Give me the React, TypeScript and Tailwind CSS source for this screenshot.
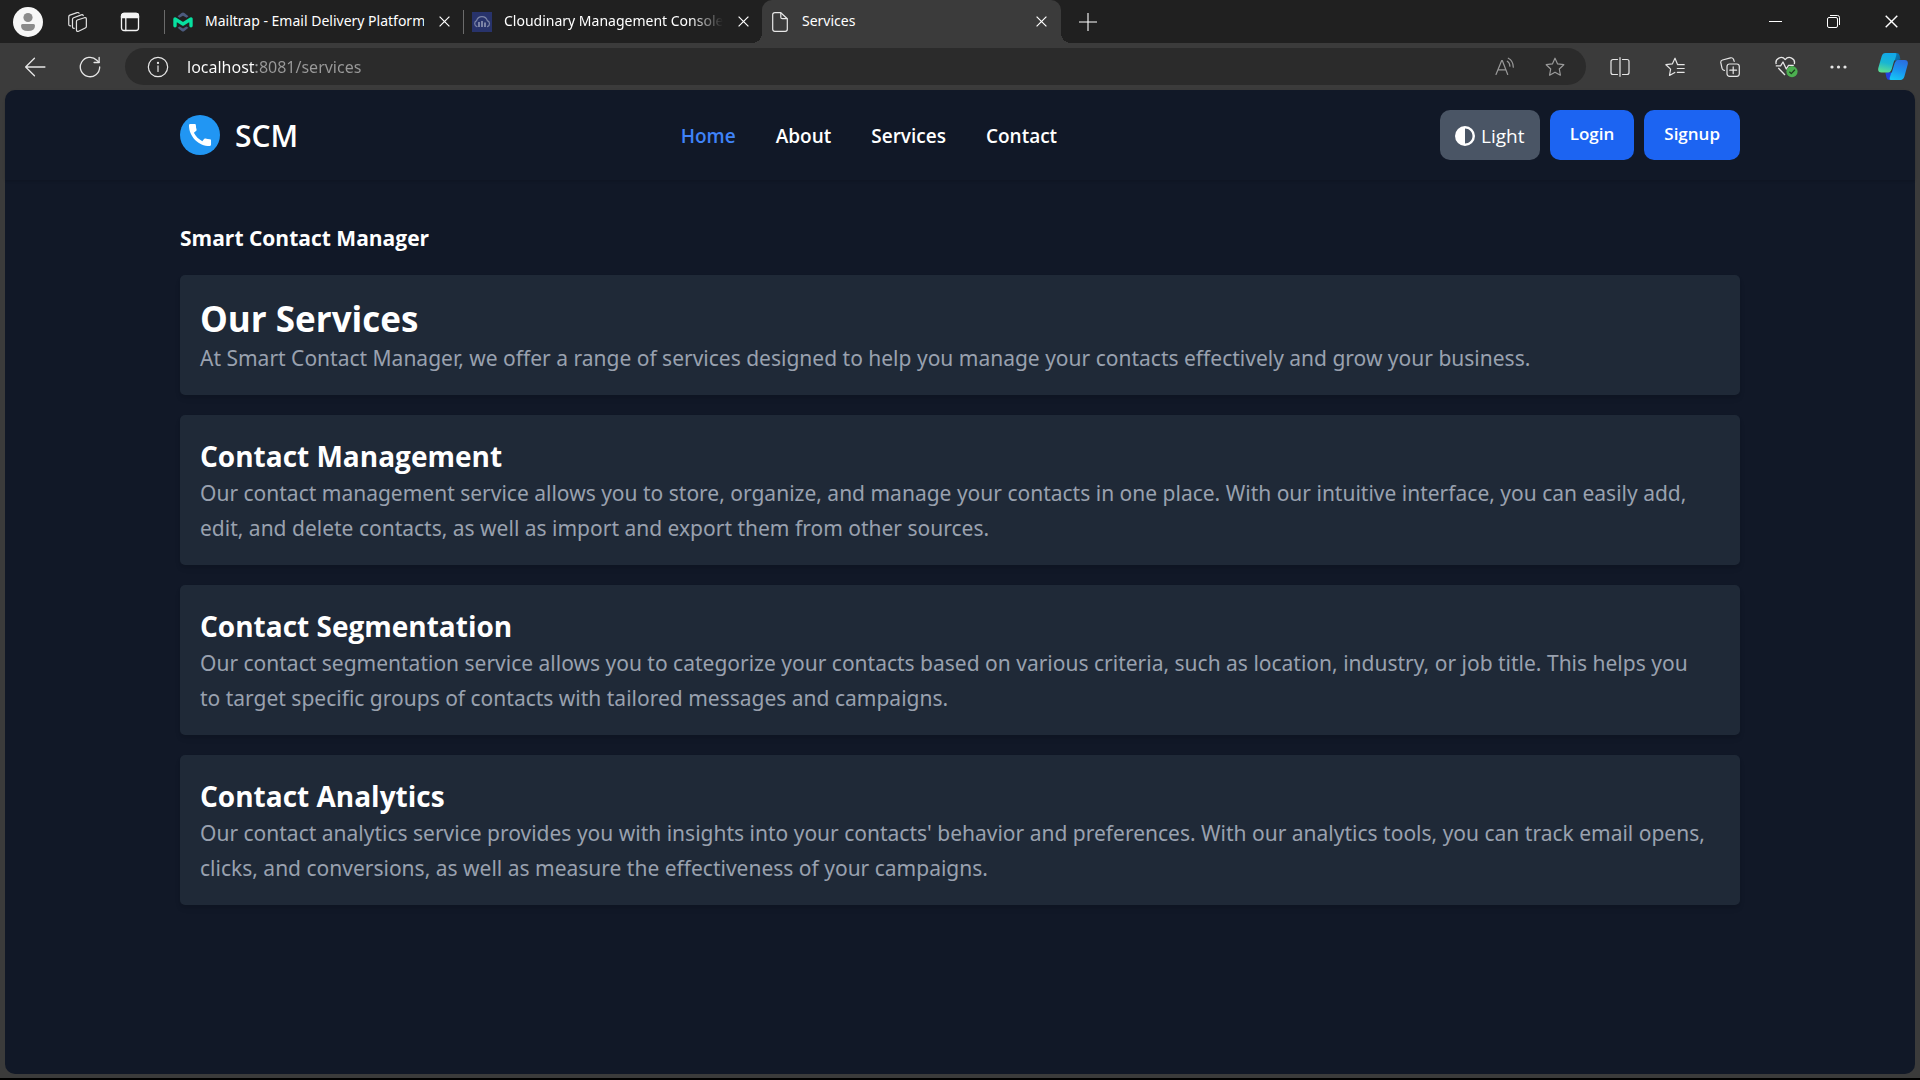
import type { ReactNode } from "react";
import { FaCircleHalfStroke } from "react-icons/fa6";

type IconProps = { children: ReactNode; className?: string; width?: number };

function Icon({ children, className = "size-5", width = 1.2 }: IconProps) {
  return (
    <svg
      viewBox="0 0 20 20"
      className={`shrink-0 ${className}`}
      fill="none"
      stroke="currentColor"
      strokeWidth={width}
      strokeLinecap="round"
      strokeLinejoin="round"
      aria-hidden="true"
    >
      {children}
    </svg>
  );
}

function CloseGlyph({ className = "size-[11px]" }: { className?: string }) {
  return (
    <svg viewBox="0 0 11 11" className={className} fill="none" stroke="currentColor" strokeWidth="1.2" aria-hidden="true">
      <path d="M.6.6l9.8 9.8M10.4.6L.6 10.4" />
    </svg>
  );
}

function MailtrapLogo() {
  return (
    <svg viewBox="0 0 20 20" className="size-5 shrink-0" aria-hidden="true">
      <path d="M4.6 4.2L8.6 1q1.4-1 2.8 0l4 3.2-1.8 1.6L10 3.8 6.4 5.8z" fill="#4c5b7e" />
      <path d="M4.6 15.8L8.6 19q1.4 1 2.8 0l4-3.2-2-1.3L10 16.4l-3.4-1.9z" fill="#4c5b7e" />
      <path d="M2 13.8V7l8 5 8-5v6.8" fill="none" stroke="#07e0a0" strokeWidth="3.4" strokeLinejoin="round" strokeLinecap="round" />
    </svg>
  );
}

function CloudinaryLogo() {
  return (
    <svg viewBox="0 0 20 20" className="size-5 shrink-0" aria-hidden="true">
      <path fill="#28336b" d="M0 0h20v20H0z" />
      <path
        d="M5 14.6A3.2 3.2 0 0 1 4.600 8.600a5.600 5.600 0 0 1 10.700 0A3.200 3.200 0 0 1 15.500 14.600"
        fill="none"
        stroke="#7c84a6"
        strokeWidth="1.2"
        strokeLinecap="round"
      />
      <path d="M7 10v5M10 9v6M13 10.500v4.500" stroke="#7c84a6" strokeWidth="2" />
    </svg>
  );
}

function FileGlyph() {
  return (
    <svg viewBox="0 0 16 20" className="h-5 w-4 shrink-0" fill="none" stroke="#e8e8e8" strokeWidth="1.2" strokeLinejoin="round" aria-hidden="true">
      <path d="M2.600.7h6.200l6.500 6v10.600a2 2 0 0 1-2 2H2.700a2 2 0 0 1-2-2V2.700a2 2 0 0 1 2-2z" />
      <path d="M8.800.7v4.500a1.500 1.500 0 0 0 1.500 1.500h5" />
    </svg>
  );
}

function CopilotLogo() {
  return (
    <svg viewBox="0 0 30 27" className="h-[27px] w-[30px]" aria-hidden="true">
      <defs>
        <linearGradient id="cpLeft" x1="0.5" y1="0" x2="0.3" y2="1">
          <stop offset="0" stopColor="#12a7e8" />
          <stop offset="0.5" stopColor="#19b6d2" />
          <stop offset="1" stopColor="#5fe08f" />
        </linearGradient>
        <linearGradient id="cpRight" x1="0.6" y1="0" x2="0.3" y2="1">
          <stop offset="0" stopColor="#2a6fe0" />
          <stop offset="0.5" stopColor="#1b93f0" />
          <stop offset="1" stopColor="#16c6f4" />
        </linearGradient>
        <linearGradient id="cpTop" x1="0" y1="0" x2="1" y2="1">
          <stop offset="0" stopColor="#0a8fc4" />
          <stop offset="1" stopColor="#0b4f8c" />
        </linearGradient>
      </defs>
      <path d="M14 0h4.500q2.400 0 3 2.300L22.500 6.500q-3 0-4 3L16 18H9z" fill="url(#cpTop)" />
      <path d="M16 27h-4.500q-2.400 0-3-2.300L7.300 19.500q4 0 5-3L15 9l6 .5z" fill="#2340e0" />
      <path d="M7.500 0H17q2 0 1.200 2.500L14 16.500q-1 3-4 3H3.500Q-.6 19.500.3 15L3.600 3.400Q4.600 0 7.500 0z" fill="url(#cpLeft)" />
      <path d="M22.500 27H13q-2 0-1.200-2.500L16 10.500q1-3.500 4-3.500h6.500q4.100 0 3.200 4.500l-3.300 12.100Q25.400 27 22.500 27z" fill="url(#cpRight)" />
      <path d="M14.600 13L16.200 7.500h2.600q-1.600.6-2.300 3L13.800 19.500h-2.500q2-.8 3.300-6.500z" fill="#3b3b3b" />
    </svg>
  );
}

function PhoneLogo() {
  return (
    <svg viewBox="0 0 40 40" className="size-10" aria-hidden="true">
      <circle cx="20" cy="20" r="20" fill="#2196f3" />
      <path
        transform="translate(5.300 5.300) scale(1.225)"
        d="M20.010 15.380c-1.230 0-2.420-.2-3.530-.56a.977.977 0 0 0-1.010.24l-1.570 1.970c-2.830-1.350-5.480-3.900-6.890-6.830l1.950-1.660c.27-.28.350-.67.240-1.020-.37-1.110-.56-2.300-.56-3.530C8.640 3.450 8.190 3 7.650 3H4.190C3.650 3 3 3.240 3 3.990 3 13.280 10.730 21 20.010 21c.71 0 .99-.63.99-1.180v-3.450c0-.54-.45-.99-.99-.99z"
        fill="#fff"
      />
    </svg>
  );
}

function Tab({ icon, title, fade = false }: { icon: ReactNode; title: string; fade?: boolean }) {
  return (
    <div className="flex h-full w-[298px] items-center gap-3 pr-[11px] pl-2">
      {icon}
      <button type="button" className={`min-w-0 flex-1 overflow-hidden pb-0.5 text-left whitespace-nowrap ${fade ? "mask-r-from-85%" : ""}`}>
        {title}
      </button>
      <button type="button" aria-label={`Close ${title}`} className="grid size-4 place-items-center">
        <CloseGlyph />
      </button>
    </div>
  );
}

function TabStrip() {
  return (
    <header className="flex h-[43px] items-center bg-[#202020] font-['Noto_Sans',sans-serif] text-[14px] text-white">
      <button type="button" aria-label="Profile" className="ml-[13px] size-[30px]">
        <svg viewBox="0 0 30 30" className="size-[30px]" aria-hidden="true">
          <circle cx="15" cy="15" r="15" fill="#f7f7f7" />
          <circle cx="15" cy="10.500" r="4.600" fill="#8b8b8b" />
          <path d="M8 18.500q0-1.500 1.500-1.500h11q1.500 0 1.500 1.500 0 5.500-7 5.500t-7-5.500z" fill="#8b8b8b" />
        </svg>
      </button>
      <button type="button" aria-label="Workspaces" className="ml-[23px] text-[#e0e0e0]">
        <Icon className="size-[22px]" width={1.1}>
          <path d="M10.300 8.200l6.500-2.100q1.700-.4 1.700 1.200v6.800q0 1-1 1.400l-6 2.900q-2 .7-2-1.200V9.600q0-1 .8-1.400z" />
          <path d="M7.600 15.700q-1.700.3-1.700-1.400V7.500q0-1 1-1.400l7-2.600q1.300-.4 1.800.6" />
          <path d="M4.200 13.500q-1.700.1-1.700-1.400V5.200q0-1 1-1.400l6.600-2.300q1.400-.4 1.800.5" />
        </Icon>
      </button>
      <button type="button" aria-label="Tab actions" className="ml-8 text-[#f4f4f4]">
        <Icon className="size-5" width={1.3}>
          <rect x="1.500" y="1.500" width="17" height="17" rx="2.500" />
          <path d="M1.500 5.500V4a2.500 2.500 0 0 1 2.500-2.500h12A2.500 2.500 0 0 1 18.500 4v1.500z" fill="currentColor" />
          <path d="M5.800 6v12.500" />
        </Icon>
      </button>
      <nav aria-label="Tabs" className="ml-6 flex h-full items-center">
        <span className="h-6 w-px bg-[#6b6b6b]" />
        <Tab icon={<MailtrapLogo />} title="Mailtrap - Email Delivery Platform" />
        <span className="h-6 w-px bg-[#6b6b6b]" />
        <Tab icon={<CloudinaryLogo />} title="Cloudinary Management Console" fade />
        <div className="relative flex h-full w-[299px] items-center gap-[14px] rounded-t-[10px] bg-[#3b3b3b] pr-3 pl-[10px]">
          <span className="absolute right-full bottom-0 size-[10px] bg-[radial-gradient(circle_at_0_0,transparent_10px,#3b3b3b_10px)]" />
          <span className="absolute bottom-0 left-full size-[10px] bg-[radial-gradient(circle_at_100%_0,transparent_10px,#3b3b3b_10px)]" />
          <FileGlyph />
          <button type="button" className="flex-1 pb-0.5 text-left">
            Services
          </button>
          <button type="button" aria-label="Close Services" className="grid size-4 place-items-center">
            <CloseGlyph />
          </button>
        </div>
      </nav>
      <button type="button" aria-label="New tab" className="ml-[18px]">
        <svg viewBox="0 0 18 18" className="size-[18px]" stroke="#fff" strokeWidth="1.1" aria-hidden="true">
          <path d="M9 0v18M0 9h18" />
        </svg>
      </button>
      <div className="mr-[22px] ml-auto flex items-center gap-[45px]">
        <button type="button" aria-label="Minimize" className="h-4">
          <svg viewBox="0 0 13 13" className="size-[13px]" stroke="#fff" strokeWidth="1" aria-hidden="true">
            <path d="M0 6.500h13" />
          </svg>
        </button>
        <button type="button" aria-label="Restore" className="h-4">
          <svg viewBox="0 0 13 13" className="size-[13px]" fill="none" stroke="#fff" strokeWidth="1" aria-hidden="true">
            <rect x=".5" y="2.500" width="10" height="10" rx="1.500" />
            <path d="M3 .5h7.500a2 2 0 0 1 2 2V10" />
          </svg>
        </button>
        <button type="button" aria-label="Close window" className="h-4">
          <CloseGlyph className="size-[13px]" />
        </button>
      </div>
    </header>
  );
}

function Toolbar() {
  return (
    <div className="flex h-[47px] items-center pr-3 pl-6 text-[#e6e6e6]">
      <button type="button" aria-label="Back">
        <Icon className="size-[22px]">
          <path d="M19 10H1.500M9.500 2L1.500 10l8 8" />
        </Icon>
      </button>
      <button type="button" aria-label="Refresh" className="ml-[33px]">
        <Icon className="size-[22px]">
          <path d="M18.800 10A8.800 8.800 0 1 1 16.200 3.800l2 2" />
          <path d="M18.300 1.300v4.600h-4.600" />
        </Icon>
      </button>
      <form className="ml-6 flex h-[37px] flex-1 items-center rounded-full bg-[#2b2b2b] pr-[21px] pl-[22px]">
        <button type="button" aria-label="Site information">
          <Icon className="size-[22px]" width={1.1}>
            <circle cx="10" cy="10" r="8.800" />
            <path d="M10 9v5" />
            <circle cx="10" cy="6.300" r=".5" fill="currentColor" />
          </Icon>
        </button>
        <input
          type="text"
          aria-label="Address"
          defaultValue="localhost:8081/services"
          className="ml-[18px] min-w-0 flex-1 bg-[linear-gradient(90deg,#fff_69px,#9a9a9a_69px)] bg-clip-text font-['Noto_Sans',sans-serif] text-[16px] text-transparent outline-none"
        />
        <div className="flex items-center gap-[30px] text-[#9a9a9a]">
          <button type="button" aria-label="Read aloud">
            <Icon>
              <path d="M1 17.500L6.700 3.500h.6l5.400 14M3 12.800h8" />
              <path d="M12.300 4.200q2.500 1.500 2.600 5M13.300 1.200q4.800 2.300 5 9" />
            </Icon>
          </button>
          <button type="button" aria-label="Add to favorites">
            <Icon>
              <path d="M10 1.200l2.600 5.700 6.200.8-4.500 4.300 1.100 6.200L10 15.200l-5.400 3 1.100-6.200L1.200 7.700l6.200-.8z" />
            </Icon>
          </button>
        </div>
      </form>
      <div className="ml-6 flex items-center gap-[30px]">
        <div className="flex items-center gap-[35px]">
          <button type="button" aria-label="Split screen">
            <Icon>
              <path d="M7.500 2.500H3a2 2 0 0 0-2 2v11a2 2 0 0 0 2 2h4.500M12.500 2.500H17a2 2 0 0 1 2 2v11a2 2 0 0 1-2 2h-4.500M10 .7v18.600" />
            </Icon>
          </button>
          <button type="button" aria-label="Favorites">
            <Icon>
              <path d="M19.200 7.700h-6.600L10 1.200 7.300 6.900.9 7.700l4.700 4.400-1.100 6.300 5.300-3M12.300 11.500h6.900M12.300 15.300h6.900" />
            </Icon>
          </button>
          <button type="button" aria-label="Collections">
            <Icon>
              <rect x="7" y="7" width="12.300" height="12.300" rx="2.500" />
              <path d="M13.200 9.800v6.800M9.800 13.200h6.800M4.500 13.500L3.300 13Q2.300 12.300 2 11.200L.8 5.700Q.5 3.600 2.500 3l8-2.200q2.200-.4 3 1.500l.7 2.100" />
            </Icon>
          </button>
          <button type="button" aria-label="Browser essentials">
            <svg viewBox="0 0 23 22" className="h-[22px] w-[23px]" fill="none" stroke="currentColor" strokeWidth="1.300" strokeLinejoin="round" aria-hidden="true">
              <path d="M1.200 8.200C-.3 2.500 6.800-.8 10.200 3.600 13.700-.8 20.800 2.500 19.300 8.200M3.300 12l6.700 7M.8 9.800h4.800L8 6l3.300 7 2.200-3.700h5.300" />
              <circle cx="17" cy="15.600" r="5.600" fill="#4caf50" stroke="none" />
              <path d="M14.400 15.800l1.900 1.800 3.600-3.900" stroke="#1e3a1f" />
            </svg>
          </button>
        </div>
        <button type="button" aria-label="Settings and more">
          <Icon>
            <g fill="currentColor" stroke="none">
              <circle cx="4" cy="10" r="1.600" />
              <circle cx="10.500" cy="10" r="1.600" />
              <circle cx="17" cy="10" r="1.600" />
            </g>
          </Icon>
        </button>
        <button type="button" aria-label="Copilot">
          <CopilotLogo />
        </button>
      </div>
    </div>
  );
}

const links = ["Home", "About", "Services", "Contact"];

function Navbar() {
  return (
    <div className="rounded-t-[10px] shadow-sm">
      <nav className="mx-auto flex w-full max-w-[1560px] items-center justify-between py-5">
        <a href="#home" className="flex items-center gap-[15px]">
          <PhoneLogo />
          <span className="text-[30px] leading-[35px] font-semibold">SCM</span>
        </a>
        <ul className="flex gap-10 pt-0.5 text-[19px] leading-[30px] font-semibold">
          {links.map((label) => (
            <li key={label}>
              <a href={`#${label.toLowerCase()}`} className={label === "Home" ? "text-[#3f83f8]" : "text-white"}>
                {label}
              </a>
            </li>
          ))}
        </ul>
        <div className="flex gap-[10px]">
          <button type="button" className="flex h-[50px] w-[100px] items-center justify-center gap-[6px] rounded-[10px] bg-gray-600 pt-0.5 text-[19px]">
            <FaCircleHalfStroke className="size-5" />
            Light
          </button>
          <a href="#login" className="h-[50px] rounded-[10px] bg-[#1c64f2] px-5 pt-[11px] text-[17px] leading-[25px] font-semibold">
            Login
          </a>
          <a href="#signup" className="h-[50px] rounded-[10px] bg-[#1c64f2] px-5 pt-[11px] text-[17px] leading-[25px] font-semibold">
            Signup
          </a>
        </div>
      </nav>
    </div>
  );
}

const services = [
  {
    title: "Contact Management",
    text: "Our contact management service allows you to store, organize, and manage your contacts in one place. With our intuitive interface, you can easily add, edit, and delete contacts, as well as import and export them from other sources.",
  },
  {
    title: "Contact Segmentation",
    text: "Our contact segmentation service allows you to categorize your contacts based on various criteria, such as location, industry, or job title. This helps you to target specific groups of contacts with tailored messages and campaigns.",
  },
  {
    title: "Contact Analytics",
    text: "Our contact analytics service provides you with insights into your contacts' behavior and preferences. With our analytics tools, you can track email opens, clicks, and conversions, as well as measure the effectiveness of your campaigns.",
  },
];

function Card({ children }: { children: ReactNode }) {
  return <section className="rounded-[5px] bg-[#1f2937] pt-[21px] pr-8 pb-[19px] pl-5 shadow-md">{children}</section>;
}

export default function App() {
  return (
    <div className="flex min-h-screen flex-col border-b-2 border-black bg-[#3b3b3b] font-['Open_Sans',sans-serif]">
      <TabStrip />
      <Toolbar />
      <div className="mx-[5px] mb-1 flex-1 rounded-[10px] bg-[#111827] text-white">
        <Navbar />
        <main className="mx-auto w-full max-w-[1560px] pt-[41px]">
          <h1 className="text-[21px] leading-[35px] font-bold">Smart Contact Manager</h1>
          <div className="mt-[19px] flex flex-col gap-5 text-[21px] leading-[35px] text-gray-400">
            <Card>
              <h2 className="text-[35px] leading-[45px] font-bold text-white">Our Services</h2>
              <p className="font-['Noto_Sans',sans-serif]">
                At Smart Contact Manager, we offer a range of services designed to help you manage your contacts effectively and grow your business.
              </p>
            </Card>
            {services.map((service) => (
              <Card key={service.title}>
                <h2 className="text-[28px] leading-10 font-bold text-white">{service.title}</h2>
                <p className="font-['Noto_Sans',sans-serif]">{service.text}</p>
              </Card>
            ))}
          </div>
        </main>
      </div>
    </div>
  );
}
